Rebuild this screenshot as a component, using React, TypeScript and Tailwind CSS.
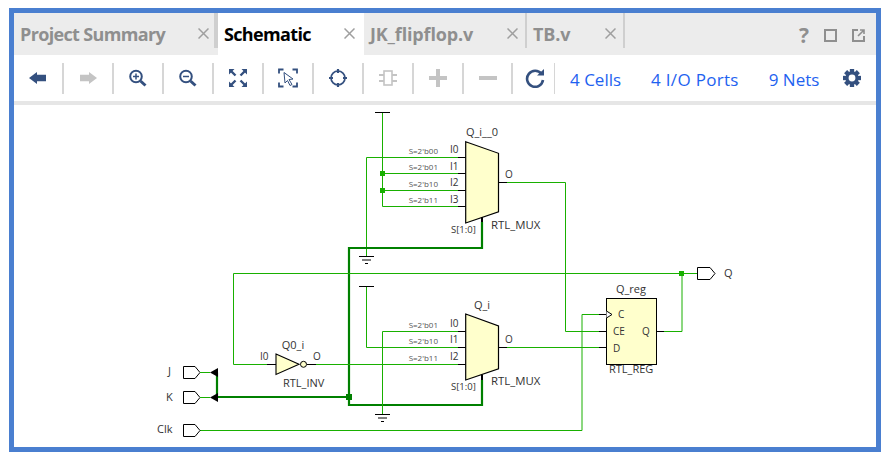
const sans = "font-['Open_Sans','Noto_Sans',sans-serif]";

function Sep() {
  return <div className="w-[2px] h-[31px] bg-[#d6d6d6] shrink-0" />;
}

function Cell({ children, narrow }: { children: React.ReactNode; narrow?: boolean }) {
  return (
    <div className={`${narrow ? "w-[47px]" : "w-[48px]"} flex items-center justify-center shrink-0 h-full`}>{children}</div>
  );
}

const NAVY = "#34507f";
const GREY = "#c4c4c4";

function Icon({ children }: { children: React.ReactNode }) {
  return (
    <svg width="20" height="20" viewBox="0 0 20 20" fill="none">
      {children}
    </svg>
  );
}

function Tab({ label, active, width, close, track }: { label: string; active?: boolean; width: string; close: number; track?: boolean }) {
  return (
    <div className={`relative flex items-center h-full ${width} ${active ? "bg-white text-black" : "text-[#8f8f8f]"}`}>
      <span className={`pl-[6px] font-bold text-[18px] leading-none -mt-[1px] ${track ? "tracking-[-0.65px]" : "tracking-[-0.15px]"}`}>{label}</span>
      <span className="absolute top-[15px] text-[#9f9f9f]" style={{ left: close }}>
        <svg width="11" height="11" viewBox="0 0 11 11"><path d="M0.5 0.5 10.5 10.5M10.5 0.5 0.5 10.5" stroke="currentColor" strokeWidth="1.5" /></svg>
      </span>
    </div>
  );
}

function Schematic() {
  const g = "#18b000";
  const dg = "#008000";
  const bk = "#000";
  const W = ({ d, c = g, w = 1 }: { d: string; c?: string; w?: number }) => (
    <path d={d} stroke={c} strokeWidth={w} fill="none" />
  );
  const T = ({ x, y, s, size = 11, anchor = "start", fill = "#333" }: { x: number; y: number; s: string; size?: number; anchor?: "start" | "middle" | "end"; fill?: string }) => (
    <text x={x} y={y} fontSize={size} textAnchor={anchor} fill={fill} fontFamily="'Open Sans','Noto Sans',sans-serif">{s}</text>
  );
  return (
    <svg className="w-full h-full block" viewBox="14 105 862 342">
      {/* upper mux wires */}
      <W d="M382.5 112V206.5" />
      <path d="M375 112.5H390" stroke={bk} />
      <W d="M366.5 157.5V256M366.5 157.5H458" />
      <W d="M382.5 173.5H458M382.5 190.5H458M382.5 206.5H458" />
      <rect x="380" y="171" width="5" height="5" fill={g} />
      <rect x="380" y="188" width="5" height="5" fill={g} />
      <path d="M458 157.5H466M458 173.5H466M458 190.5H466M458 206.5H466" stroke={bk} />
      <path d="M359 256.5H374M362 260H371M365 263.5H368" stroke={bk} />
      <path d="M465.7 141.7 498.5 153.3V211.7L465.7 223Z" fill="#ffffcc" stroke={bk} strokeWidth="1.2" />
      <path d="M498 182.5H507" stroke={bk} />
      <W d="M507 182.5H565.5V331.5H599" />
      <path d="M599 331.5H606" stroke={bk} />
      {/* bus */}
      <W d="M482 222V248H349V405H482V380" c={dg} w={2.2} />
      <W d="M217 372.5V397H349" c={dg} w={2.2} />
      <path d="M482 217V222M482 374.5V380" stroke={bk} strokeWidth="2" />
      <rect x="346" y="394" width="6" height="6" fill={dg} />
      {/* lower mux */}
      <W d="M366.5 286V347.5H458" />
      <path d="M359 286.5H374" stroke={bk} />
      <W d="M382.5 331.5V414M382.5 331.5H458" />
      <path d="M375 414.5H390M378 418H387M381 421.5H384" stroke={bk} />
      <path d="M458 331.5H466M458 347.5H466M458 364.5H466" stroke={bk} />
      <W d="M316 364.5H458" />
      <path d="M465.7 314 498.5 326V368.7L465.7 380Z" fill="#ffffcc" stroke={bk} strokeWidth="1.2" />
      <path d="M498 347.5H507" stroke={bk} />
      <W d="M507 347.5H599" />
      <path d="M599 347.5H606" stroke={bk} />
      {/* feedback */}
      <W d="M267 364.5H233.5V273.5H697" />
      <path d="M267 364.5H276" stroke={bk} />
      <path d="M276 354 299 364.3 276 374.5Z" fill="#ffffcc" stroke={bk} strokeWidth="1.1" />
      <circle cx="303.5" cy="364.3" r="3" fill="#ffffcc" stroke={bk} />
      <path d="M307 364.5H316" stroke={bk} />
      {/* register */}
      <rect x="606.5" y="298.5" width="50" height="66" fill="#ffffcc" stroke={bk} />
      <path d="M606.5 311 612 314.5 606.5 318" fill="#fff" stroke={bk} />
      <W d="M200 430.5H582V314.5H599" />
      <path d="M599 314.5H606" stroke={bk} />
      <path d="M657 331.5H664" stroke={bk} />
      <W d="M664 331.5H682V273.5" />
      <rect x="679" y="271" width="5" height="5" fill={g} />
      {/* ports */}
      <path d="M697.5 267.5H710L715 273.5 710 279.5H697.5Z" fill="#fff" stroke={bk} />
      <path d="M183.5 366.5H195L200 372.5 195 378.5H183.5Z" fill="#fff" stroke={bk} />
      <path d="M183.5 391.5H195L200 397.5 195 403.5H183.5Z" fill="#fff" stroke={bk} />
      <path d="M183.5 424.5H195L200 430.5 195 436.5H183.5Z" fill="#fff" stroke={bk} />
      <W d="M200 372.5H210M200 397.5H210" />
      <path d="M210 372.5 218 368V377ZM210 397.5 218 393V402Z" fill={bk} />
      {/* labels */}
      <T x={482} y={136} s="Q_i__0" anchor="middle" />
      <T x={450} y={153} s="I0" size={10} />
      <T x={450} y={170} s="I1" size={10} />
      <T x={450} y={186} s="I2" size={10} />
      <T x={450} y={203} s="I3" size={10} />
      {[["S=2'b00",154],["S=2'b01",170],["S=2'b10",187],["S=2'b11",203]].map(([s,y]) => (
        <T key={String(y)} x={438} y={y as number} s={s as string} size={8} anchor="end" fill="#555" />
      ))}
      <T x={451} y={233} s="S[1:0]" size={9.5} />
      <T x={491} y={229} s="RTL_MUX" size={11.4} />
      <T x={505} y={178} s="O" size={10} />
      <T x={482} y={309} s="Q_i" anchor="middle" />
      <T x={450} y={327} s="I0" size={10} />
      <T x={450} y={343} s="I1" size={10} />
      <T x={450} y={360} s="I2" size={10} />
      {[["S=2'b01",328],["S=2'b10",344],["S=2'b11",361]].map(([s,y]) => (
        <T key={String(y)} x={438} y={y as number} s={s as string} size={8} anchor="end" fill="#555" />
      ))}
      <T x={451} y={390} s="S[1:0]" size={9.5} />
      <T x={491} y={385} s="RTL_MUX" size={11.4} />
      <T x={505} y={343} s="O" size={10} />
      <T x={293} y={349} s="Q0_i" anchor="middle" />
      <T x={260} y={360} s="I0" size={10} />
      <T x={313} y={360} s="O" size={10} />
      <T x={283} y={387} s="RTL_INV" />
      <T x={631} y={293} s="Q_reg" anchor="middle" />
      <T x={609} y={373} s="RTL_REG" />
      <T x={618} y={318} s="C" size={10} />
      <T x={613} y={335} s="CE" size={10} />
      <T x={613} y={352} s="D" size={10} />
      <T x={642} y={335} s="Q" size={10} />
      <T x={724} y={277} s="Q" />
      <T x={168} y={375} s="J" />
      <T x={166} y={401} s="K" />
      <T x={157} y={433} s="Clk" />
    </svg>
  );
}

export default function App() {
  const teeth = [0, 45, 90, 135, 180, 225, 270, 315];
  return (
    <div className={`w-[889px] h-[456px] bg-white pt-[8px] pl-[9px] pr-[8px] pb-[4px] overflow-hidden ${sans}`}>
      <div className="w-[872px] h-[444px] border-[5px] border-[#4a7fd0] flex flex-col bg-white">
        <div className="h-[42px] bg-[#ececec] flex shrink-0 relative">
          <Tab label="Project Summary" width="w-[200px]" close={184} track />
          <div className="w-[4px] h-[35px] bg-[#cfcfcf]" />
          <Tab label="Schematic" active width="w-[146px]" close={126} track />
          <Tab label="JK_flipflop.v" width="w-[161px]" close={143} />
          <div className="w-[2px] h-[35px] bg-[#cfcfcf]" />
          <Tab label="TB.v" width="w-[96px]" close={78} />
          <div className="w-[2px] h-[35px] bg-[#cfcfcf]" />
          <div className="flex-1 flex items-center justify-end gap-[15px] pr-[11px] pt-[2px] text-[#8f8f8f]">
            <span className="font-bold text-[21px] leading-none">?</span>
            <svg width="13" height="13" viewBox="0 0 13 13" fill="none"><rect x="1" y="1" width="11" height="11" stroke="currentColor" strokeWidth="2" /></svg>
            <svg width="13" height="13" viewBox="0 0 13 13" fill="none"><path d="M6 1H1V12H12V7" stroke="currentColor" strokeWidth="2" /><path d="M6 7 12 1M8 1H12V5" stroke="currentColor" strokeWidth="1.6" /></svg>
          </div>
        </div>
        <div className="h-[46px] bg-white flex items-center shrink-0">
          <Cell><Icon><path d="M1 10 9 4V6.7H18V13.3H9V16Z" fill={NAVY} /></Icon></Cell>
          <Sep />
          <Cell><Icon><path d="M19 10 11 4V6.7H2V13.3H11V16Z" fill={GREY} /></Icon></Cell>
          <Sep />
          <Cell><Icon><circle cx="8" cy="8.5" r="5.8" stroke={NAVY} strokeWidth="2" /><path d="M5 8.5H11M8 5.5V11.5" stroke={NAVY} strokeWidth="1.5" /><path d="M12.5 13 17.5 17.5" stroke={NAVY} strokeWidth="3" /></Icon></Cell>
          <Sep />
          <Cell><Icon><circle cx="8" cy="8.5" r="5.8" stroke={NAVY} strokeWidth="2" /><path d="M5 8.5H11" stroke={NAVY} strokeWidth="1.5" /><path d="M12.5 13 17.5 17.5" stroke={NAVY} strokeWidth="3" /></Icon></Cell>
          <Sep />
          <Cell><Icon><path d="M1 1H6.5L1 6.5ZM19 1H13.5L19 6.5ZM1 19H6.5L1 13.5ZM19 19H13.5L19 13.5Z" fill={NAVY} /><path d="M3 3 7.5 7.5M17 3 12.5 7.5M3 17 7.5 12.5M17 17 12.5 12.5" stroke={NAVY} strokeWidth="2.4" /></Icon></Cell>
          <Sep />
          <Cell><Icon><path d="M1 5.5V1.5H5.5M14.5 1.5H19V5.5M1 14.5V18.5H5.5M19 14.5V18.5H14.5" stroke={NAVY} strokeWidth="1.8" /><path d="M6 4.5 15 11 11 11.5 14 16.5 12 17.5 9.5 12.5 7 15Z" fill="#fff" stroke={NAVY} strokeWidth="1" /></Icon></Cell>
          <Sep />
          <Cell><Icon><circle cx="10" cy="10" r="7" stroke={NAVY} strokeWidth="1.7" /><path d="M10 1V5M10 15V19M1 10H5M15 10H19" stroke={NAVY} strokeWidth="2.2" /></Icon></Cell>
          <Sep />
          <Cell><Icon><rect x="6" y="3" width="8" height="14" stroke={GREY} strokeWidth="1.6" /><path d="M1 7H6M1 13H6M14 7H19M14 13H19" stroke={GREY} strokeWidth="1.8" /></Icon></Cell>
          <Sep />
          <Cell><Icon><path d="M10 1V19M1 10H19" stroke={GREY} strokeWidth="4" /></Icon></Cell>
          <Sep />
          <Cell narrow><Icon><path d="M1 10H19" stroke={GREY} strokeWidth="4" /></Icon></Cell>
          <Sep />
          <div className="w-[41px] flex items-center justify-center shrink-0 pl-[2px]"><Icon><path d="M16.5 6A8 8 0 1 0 18 12" stroke={NAVY} strokeWidth="2.6" /><path d="M12 7.5H19V1Z" fill={NAVY} /></Icon></div>
          <div className="w-[1px] h-[31px] bg-[#d6d6d6] shrink-0" />
          <div className="flex items-center text-[#1e62f0] text-[17px] leading-none pl-[15px] mt-[3px] whitespace-nowrap">
            <span>4 Cells</span>
            <span className="ml-[30px] tracking-[0.3px]">4 I/O Ports</span>
            <span className="ml-[30px]">9 Nets</span>
          </div>
          <div className="ml-[24px] shrink-0 flex">
            <svg width="18" height="18" viewBox="0 0 20 20">
              {teeth.map((a) => (
                <rect key={a} x="7.6" y="0" width="4.8" height="5" fill={NAVY} transform={`rotate(${a} 10 10)`} />
              ))}
              <circle cx="10" cy="10" r="5.6" fill="none" stroke={NAVY} strokeWidth="3.6" />
            </svg>
          </div>
        </div>
        <div className="h-[4px] bg-[#e6e6e6] shrink-0" />
        <div className="flex-1 min-h-0 bg-white">
          <Schematic />
        </div>
      </div>
    </div>
  );
}
